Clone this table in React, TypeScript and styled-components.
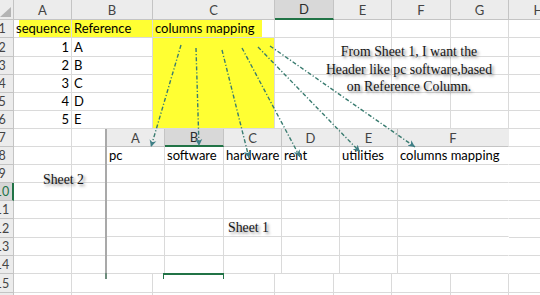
import React from 'react';
import styled, { createGlobalStyle, css } from 'styled-components';

const Global = createGlobalStyle`
  html, body { margin: 0; padding: 0; background: #fff; }
  body { width: 540px; height: 295px; overflow: hidden; }
`;

const GRID = '#dadada';
const HEAD_BG = '#ececec';
const HEAD_LINE = '#c4c4c4';
const GREEN = '#217346';
const YELLOW = '#ffff33';

const Page = styled.div`
  position: relative;
  width: 540px;
  height: 295px;
  overflow: hidden;
  background: #fff;
  font-family: Lato, "Open Sans", sans-serif;
  color: #000;
`;

const Sheet = styled.div<{ $cols: string; $rows: string }>`
  display: grid;
  grid-template-columns: ${(p) => p.$cols};
  grid-template-rows: ${(p) => p.$rows};
  background: #fff;
`;

const Corner = styled.div`
  position: relative;
  background: ${HEAD_BG};
  border-right: 1px solid ${HEAD_LINE};
  border-bottom: 1px solid ${HEAD_LINE};
  overflow: hidden;
  &::after {
    content: '';
    position: absolute;
    right: 2px;
    bottom: 2px;
    width: 11px;
    height: 10px;
    background: #b4b4b4;
    clip-path: polygon(0 100%, 100% 0, 100% 100%);
  }
`;

const ColHead = styled.div<{ $sel?: boolean; $last?: boolean }>`
  display: flex;
  align-items: center;
  justify-content: center;
  background: ${HEAD_BG};
  border-right: 1px solid ${(p) => (p.$last ? 'transparent' : HEAD_LINE)};
  border-bottom: 1px solid ${HEAD_LINE};
  font-size: 13px;
  color: #444;
  ${(p) =>
    p.$sel &&
    css`
      background: #d8d8d8;
      border-bottom: 2px solid ${GREEN};
      color: #2b2b2b;
    `}
`;

const RowHead = styled.div<{ $sel?: boolean }>`
  display: flex;
  align-items: center;
  overflow: hidden;
  background: ${HEAD_BG};
  border-right: 1px solid ${HEAD_LINE};
  border-bottom: 1px solid ${HEAD_LINE};
  font-size: 12.5px;
  color: #444;
  ${(p) =>
    p.$sel &&
    css`
      background: #d6d6d6;
      border-right: 2px solid ${GREEN};
      color: ${GREEN};
    `}
`;

const RowNum = styled.span`
  flex: 0 0 30px;
  margin-left: -13px;
  text-align: center;
`;

const Cell = styled.div<{ $fill?: string; $right?: boolean; $span?: number; $noRight?: boolean }>`
  display: flex;
  align-items: flex-end;
  justify-content: ${(p) => (p.$right ? 'flex-end' : 'flex-start')};
  padding: 0 2px 1px 2px;
  box-sizing: border-box;
  min-width: 0;
  background: ${(p) => p.$fill || '#fff'};
  border-right: 1px solid ${(p) => (p.$noRight ? 'transparent' : GRID)};
  border-bottom: 1px solid ${GRID};
  font-size: 13px;
  line-height: 16px;
  white-space: nowrap;
  ${(p) => p.$span && css`grid-row: span ${p.$span};`}
`;

const Picture = styled.div`
  position: absolute;
  left: 105px;
  top: 129px;
  width: 404px;
  height: 145px;
  border-left: 2px solid #a9a9a9;
  box-sizing: border-box;
  background: #fff;
`;

const Annotation = styled.div<{ $left: number; $top: number; $width?: number }>`
  position: absolute;
  left: ${(p) => p.$left}px;
  top: ${(p) => p.$top}px;
  width: ${(p) => (p.$width ? `${p.$width}px` : 'auto')};
  font-family: "Liberation Serif", "DejaVu Serif", serif;
  font-size: 13.8px;
  line-height: 17.5px;
  text-align: center;
  color: #141414;
  white-space: nowrap;
  text-shadow: 2px 2px 3px rgba(0, 0, 0, 0.45);
`;

const Arrows = styled.svg`
  position: absolute;
  left: 0;
  top: 0;
  width: 540px;
  height: 295px;
  pointer-events: none;
`;

const LeftTick = styled.div`
  position: absolute;
  left: 105px;
  top: 273px;
  width: 2px;
  height: 6px;
  background: #6d8c7c;
`;

const SelBracket = styled.div`
  position: absolute;
  left: 163px;
  top: 273px;
  width: 61px;
  height: 6px;
  box-sizing: border-box;
  border-top: 2px solid ${GREEN};
  border-left: 1.5px solid ${GREEN};
  border-right: 1.5px solid ${GREEN};
`;

const bgCols = ['A', 'B', 'C', 'D', 'E', 'F', 'G', 'H'];
const bgColWidths = '14px 58px 81px 122px 59px 58px 59px 58px 60px';
const bgRowHeights = [20, 18, 19, 18, 18, 18, 18, 18, 18, 18, 18, 18, 19, 18, 18, 19, 18]
  .map((h) => `${h}px`)
  .join(' ');

const picCols = ['A', 'B', 'C', 'D', 'E', 'F'];
const picHeaders = ['pc', 'software', 'hardware', 'rent', 'utilities', 'columns mapping'];

const lines: [number, number, number, number][] = [
  [181, 45, 151, 147],
  [196, 48, 199, 146],
  [222, 50, 249, 158],
  [242, 48, 300, 157],
  [258, 47, 360, 152],
  [270, 46, 415, 147],
];

function BackgroundSheet() {
  const cells: React.ReactNode[] = [];
  cells.push(<Corner key="corner" />);
  bgCols.forEach((c) =>
    cells.push(
      <ColHead key={`h${c}`} $sel={c === 'D'}>
        {c}
      </ColHead>
    )
  );
  for (let r = 1; r <= 16; r++) {
    cells.push(
      <RowHead key={`r${r}`} $sel={r === 10}>
        <RowNum>{r}</RowNum>
      </RowHead>
    );
    if (r === 1) {
      cells.push(
        <Cell key="A1" $fill={`linear-gradient(to right, #fff 5px, ${YELLOW} 5px)`}>
          sequence
        </Cell>
      );
      cells.push(
        <Cell key="B1" $fill={YELLOW}>
          Reference
        </Cell>
      );
      cells.push(
        <Cell key="C1" $fill={`linear-gradient(to right, ${YELLOW} 109px, #fff 109px)`}>
          columns mapping
        </Cell>
      );
    } else {
      const seq = r <= 6 ? r - 1 : null;
      cells.push(
        <Cell key={`A${r}`} $right>
          {seq ?? ''}
        </Cell>
      );
      cells.push(<Cell key={`B${r}`}>{seq ? String.fromCharCode(64 + seq) : ''}</Cell>);
      if (r === 2) {
        cells.push(<Cell key="C2" $fill={YELLOW} $span={5} />);
      } else if (r > 6) {
        cells.push(<Cell key={`C${r}`} />);
      }
    }
    ['D', 'E', 'F', 'G', 'H'].forEach((c) => cells.push(<Cell key={`${c}${r}`} />));
  }
  return (
    <Sheet $cols={bgColWidths} $rows={bgRowHeights}>
      {cells}
    </Sheet>
  );
}

function PastedSheet() {
  const cells: React.ReactNode[] = [];
  picCols.forEach((c, i) =>
    cells.push(
      <ColHead key={`ph${c}`} $sel={c === 'B'} $last={i === picCols.length - 1}>
        {c}
      </ColHead>
    )
  );
  for (let r = 0; r < 7; r++) {
    picCols.forEach((c, i) =>
      cells.push(
        <Cell key={`p${c}${r}`} $noRight={i === picCols.length - 1}>
          {r === 0 ? picHeaders[i] : ''}
        </Cell>
      )
    );
  }
  return (
    <Picture>
      <Sheet $cols="58px 59px 58px 58px 58px 111px" $rows="18px 18px 18px 18px 18px 18px 19px 18px">
        {cells}
      </Sheet>
    </Picture>
  );
}

export default function App() {
  return (
    <Page>
      <Global />
      <BackgroundSheet />
      <PastedSheet />
      <LeftTick />
      <SelBracket />
      <Annotation $left={309} $top={43} $width={200}>
        From Sheet 1, I want the
        <br />
        Header like pc software,based
        <br />
        on Reference Column.
      </Annotation>
      <Annotation $left={43} $top={171}>
        Sheet 2
      </Annotation>
      <Annotation $left={228} $top={219}>
        Sheet 1
      </Annotation>
      <Arrows viewBox="0 0 540 295">
        <defs>
          <marker
            id="head"
            markerUnits="userSpaceOnUse"
            markerWidth="8"
            markerHeight="8"
            refX="7"
            refY="4"
            orient="auto"
          >
            <path d="M0,0.5 L7,4 L0,7.5 L2,4 z" fill="#3f7f86" />
          </marker>
        </defs>
        {lines.map(([x1, y1, x2, y2], i) => (
          <line
            key={i}
            x1={x1}
            y1={y1}
            x2={x2}
            y2={y2}
            stroke="#3a7c70"
            strokeWidth={1.4}
            strokeDasharray="4 2 1.2 2"
            markerEnd="url(#head)"
          />
        ))}
      </Arrows>
    </Page>
  );
}
